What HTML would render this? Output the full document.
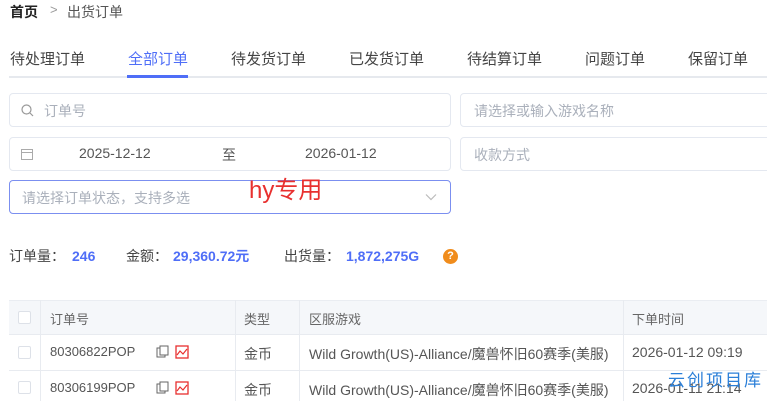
<!DOCTYPE html>
<html><head><meta charset="utf-8"><style>
*{margin:0;padding:0;box-sizing:border-box}
body{width:767px;height:401px;overflow:hidden;background:#fff;font-family:"Liberation Sans","Noto Sans CJK SC",sans-serif;color:#333;position:relative}
.a{position:absolute;white-space:nowrap}
.inp{position:absolute;border:1px solid #e4e8f0;border-radius:4px;background:#fff}
.ph{color:#aab0bb;font-size:14px}
.tab{position:absolute;top:48px;font-size:15px;color:#444}
.cell{position:absolute;font-size:13px;color:#555}
.vl{position:absolute;width:1px;background:#e8ebf0}
.cb{position:absolute;left:18px;width:13px;height:13px;border:1px solid #dde1e8;border-radius:2px;background:#fff}
.sl{position:absolute;top:246px;height:20px;line-height:20px;font-size:14px;color:#444}
.sv{position:absolute;top:246px;height:20px;line-height:20px;font-size:14px;color:#4f6ef7;font-weight:bold}
</style></head><body>
<div class="a" style="left:10px;top:2px;font-size:14px;font-weight:bold;color:#222">首页</div>
<div class="a" style="left:50px;top:2px;font-size:13px;color:#999">&gt;</div>
<div class="a" style="left:67px;top:2px;font-size:14px;color:#555">出货订单</div>

<div class="tab" style="left:10px">待处理订单</div>
<div class="tab" style="left:128px;color:#4f6ef7">全部订单</div>
<div class="tab" style="left:231px">待发货订单</div>
<div class="tab" style="left:349px">已发货订单</div>
<div class="tab" style="left:467px">待结算订单</div>
<div class="tab" style="left:585px">问题订单</div>
<div class="tab" style="left:688px">保留订单</div>
<div class="a" style="left:9px;top:76px;width:758px;height:2px;background:#e6e9ee"></div>
<div class="a" style="left:127px;top:75px;width:61px;height:3px;background:#4f6ef7"></div>

<div class="inp" style="left:9px;top:93px;width:442px;height:34px"></div>
<svg class="a" style="left:21px;top:104px" width="13" height="13" viewBox="0 0 13 13"><circle cx="5.5" cy="5.5" r="4.5" fill="none" stroke="#999" stroke-width="1.2"/><path d="M9 9l3 3" stroke="#999" stroke-width="1.2"/></svg>
<div class="a ph" style="left:44px;top:101px">订单号</div>
<div class="inp" style="left:460px;top:93px;width:320px;height:34px"></div>
<div class="a ph" style="left:474px;top:101px">请选择或输入游戏名称</div>

<div class="inp" style="left:9px;top:137px;width:442px;height:34px"></div>
<svg class="a" style="left:21px;top:148px" width="12" height="12" viewBox="0 0 12 12"><rect x="0.5" y="1.5" width="11" height="10" fill="none" stroke="#aaa"/><path d="M0.5 4.5h11" stroke="#aaa"/></svg>
<div class="a" style="left:79px;top:145px;font-size:14px;color:#555">2025-12-12</div>
<div class="a" style="left:222px;top:145px;font-size:14px;color:#555">至</div>
<div class="a" style="left:305px;top:145px;font-size:14px;color:#555">2026-01-12</div>
<div class="inp" style="left:460px;top:137px;width:320px;height:34px"></div>
<div class="a ph" style="left:474px;top:145px">收款方式</div>

<div class="inp" style="left:9px;top:180px;width:442px;height:34px;border-color:#7b8ff0"></div>
<div class="a ph" style="left:22px;top:188px">请选择订单状态，支持多选</div>
<svg class="a" style="left:425px;top:193px" width="12" height="8" viewBox="0 0 12 8"><path d="M1 1.5l5 5 5-5" fill="none" stroke="#bbb" stroke-width="1.2"/></svg>
<div class="a" style="left:249px;top:170px;font-size:24px;color:#e8302f">hy专用</div>

<div class="sl" style="left:9px">订单量：</div>
<div class="sv" style="left:72px">246</div>
<div class="sl" style="left:126px">金额：</div>
<div class="sv" style="left:173px">29,360.72元</div>
<div class="sl" style="left:284px">出货量：</div>
<div class="sv" style="left:346px">1,872,275G</div>
<div class="a" style="left:443px;top:249px;width:15px;height:15px;border-radius:50%;background:#f08c1c;color:#fff;font-size:11px;font-weight:bold;text-align:center;line-height:15px">?</div>

<div class="a" style="left:9px;top:300px;width:760px;height:34px;background:#f5f7fa;border-top:1px solid #eaedf2"></div>
<div class="a" style="left:9px;top:334px;width:760px;height:1px;background:#e8ebf0"></div>
<div class="a" style="left:9px;top:370px;width:760px;height:1px;background:#e8ebf0"></div>
<div class="vl" style="left:40px;top:300px;height:101px"></div>
<div class="vl" style="left:235px;top:300px;height:101px"></div>
<div class="vl" style="left:299px;top:300px;height:101px"></div>
<div class="vl" style="left:623px;top:300px;height:101px"></div>
<div class="cb" style="top:311px"></div>
<div class="cb" style="top:346px"></div>
<div class="cb" style="top:381px"></div>
<div class="cell" style="left:50px;top:309px;color:#666">订单号</div>
<div class="cell" style="left:244px;top:309px;color:#666">类型</div>
<div class="cell" style="left:309px;top:309px;color:#666">区服游戏</div>
<div class="cell" style="left:632px;top:309px;color:#666">下单时间</div>

<div class="cell" style="left:50px;top:344px">80306822POP</div>
<div class="cell" style="left:50px;top:380px">80306199POP</div>
<svg class="a" style="left:156px;top:345px" width="34" height="14" viewBox="0 0 34 14"><rect x="1" y="3" width="8" height="9" fill="none" stroke="#666"/><rect x="4" y="1" width="8" height="9" fill="#fff" stroke="#666"/><rect x="20" y="1" width="12" height="12" fill="none" stroke="#e8302f" stroke-width="1.3"/><path d="M21 10l3-4 3 3 4-5" fill="none" stroke="#e8302f" stroke-width="1.2"/></svg>
<svg class="a" style="left:156px;top:381px" width="34" height="14" viewBox="0 0 34 14"><rect x="1" y="3" width="8" height="9" fill="none" stroke="#666"/><rect x="4" y="1" width="8" height="9" fill="#fff" stroke="#666"/><rect x="20" y="1" width="12" height="12" fill="none" stroke="#e8302f" stroke-width="1.3"/><path d="M21 10l3-4 3 3 4-5" fill="none" stroke="#e8302f" stroke-width="1.2"/></svg>
<div class="cell" style="left:244px;top:344px;font-size:14px">金币</div>
<div class="cell" style="left:244px;top:380px;font-size:14px">金币</div>
<div class="cell" style="left:309px;top:344px;font-size:14px;width:312px;overflow:hidden">Wild Growth(US)-Alliance/魔兽怀旧60赛季(美服)</div>
<div class="cell" style="left:309px;top:380px;font-size:14px;width:312px;overflow:hidden">Wild Growth(US)-Alliance/魔兽怀旧60赛季(美服)</div>
<div class="cell" style="left:632px;top:344px;font-size:14px">2026-01-12 09:19</div>
<div class="cell" style="left:632px;top:380px;font-size:14px">2026-01-11 21:14</div>
<div class="a" style="left:668px;top:366px;font-size:17px;color:#2b7fd8;letter-spacing:2px">云创项目库</div>
</body></html>
